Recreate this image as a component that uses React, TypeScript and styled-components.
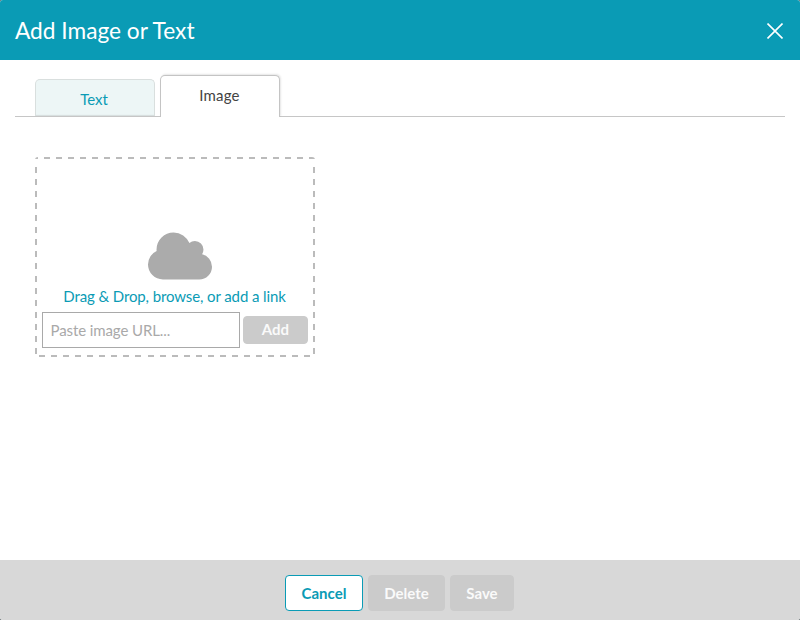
import React from 'react';
import styled, { createGlobalStyle, css } from 'styled-components';

const GlobalStyle = createGlobalStyle`
  * { box-sizing: border-box; }
  body { margin: 0; background: #6d7678; font-family: Lato, "Liberation Sans", sans-serif; }
`;

const Dialog = styled.div`
  display: flex;
  flex-direction: column;
  width: 800px;
  height: 620px;
  overflow: hidden;
  background: #fff;
  border-radius: 3px;
`;

const Header = styled.header`
  display: flex;
  align-items: center;
  justify-content: space-between;
  height: 60px;
  padding: 2px 17px 0 15px;
  background: #0a9bb5;
`;

const Title = styled.h1`
  margin: 0;
  font-size: 22.7px;
  line-height: 30px;
  font-weight: 400;
  color: #fff;
`;

const CloseButton = styled.button`
  display: flex;
  padding: 0;
  border: 0;
  background: none;
`;

const Body = styled.main`
  flex: 1;
  padding: 15px 15px 0;
`;

const TabList = styled.div`
  display: flex;
  align-items: flex-end;
  gap: 5px;
  height: 42px;
  padding: 0 20px;
  border-bottom: 1px solid #c6c6c6;
`;

const Tab = styled.button<{ $active?: boolean }>`
  width: 120px;
  height: 37px;
  padding: 2px 2px 0 0;
  border: 1px solid #d9dfde;
  border-bottom: 0;
  border-radius: 5px 5px 0 0;
  background: #edf6f6;
  box-shadow: inset 0 -2px 1px -1px #d5dddd;
  color: #0a9bb5;
  font: 400 15px/20px Lato, sans-serif;
  ${({ $active }) =>
    $active &&
    css`
      height: 42px;
      margin-bottom: -1px;
      padding: 0 1px 3px 0;
      border-color: #c4c4c4;
      background: #fff;
      box-shadow: 1px -1px 2px rgba(0, 0, 0, 0.1);
      clip-path: inset(-4px -4px 0 -4px);
      color: #444;
      letter-spacing: 0.2px;
    `}
`;

const DropZone = styled.section`
  display: flex;
  flex-direction: column;
  align-items: center;
  width: 280px;
  height: 200px;
  margin: 40px 0 0 20px;
  padding: 75px 7px 0;
  border-radius: 3px;
  --dash: #bbb 0 6px, transparent 6px 12.06px;
  background:
    repeating-linear-gradient(90deg, var(--dash)) 9px 0 / 271px 2px no-repeat,
    repeating-linear-gradient(90deg, var(--dash)) 4px 100% / 276px 2px no-repeat,
    repeating-linear-gradient(180deg, var(--dash)) 0 10px / 2px 188px no-repeat,
    repeating-linear-gradient(180deg, var(--dash)) 100% 10px / 2px 188px no-repeat,
    linear-gradient(#bbb, #bbb) 0 0 / 3px 2px no-repeat;
`;

const Hint = styled.p`
  margin: 6px 1px 6px 0;
  font-size: 15px;
  letter-spacing: -0.11px;
  line-height: 20px;
  color: #0a9bb5;
`;

const LinkRow = styled.div`
  display: flex;
  align-items: center;
  gap: 3px;
  width: 266px;
`;

const UrlInput = styled.input`
  width: 198px;
  height: 36px;
  padding: 0 7.5px;
  border: 1px solid #a9a9a9;
  background: #fff;
  font: 400 15px/20px Lato, sans-serif;
  letter-spacing: -0.1px;
  &::placeholder { color: #a9a9a9; }
`;

const Button = styled.button<{ $width: number; $small?: boolean; $outlined?: boolean }>`
  width: ${({ $width }) => $width}px;
  height: ${({ $small }) => ($small ? 28 : 36)}px;
  padding: ${({ $small }) => ($small ? '0 0 2px' : '0')};
  border: 1px solid ${({ $outlined }) => ($outlined ? '#0a9bb5' : '#cbcbcb')};
  border-radius: 4px;
  background: ${({ $outlined }) => ($outlined ? '#fff' : '#cbcbcb')};
  color: ${({ $outlined }) => ($outlined ? '#0a9bb5' : '#fafafa')};
  font: 700 15px/20px Lato, sans-serif;
`;

const Footer = styled.footer`
  display: flex;
  gap: 5px;
  height: 60px;
  padding: 15px 0 0 285px;
  background: #d8d8d8;
`;

const CloseIcon = () => (
  <svg width="16" height="16" viewBox="0 0 16 16" fill="none" stroke="#fff" strokeWidth="1.6">
    <path d="M0.5 0.5l15 15M15.5 0.5l-15 15" />
  </svg>
);

const CloudShape = styled.svg`
  flex: none;
  margin-left: 10px;
`;

const CloudIcon = () => (
  <CloudShape width="64" height="48" viewBox="0 -143 1920 1440" fill="#ababab">
    <path d="M1920 896q0 159-112.5 271.5T1536 1280H448q-185 0-316.5-131.5T0 832q0-132 71-241.5T258 427q-2-28-2-43 0-212 150-362t362-150q158 0 286.5 88T1242 190q70-62 166-62 106 0 181 75t75 181q0 75-41 138 129 30 213 134.5t84 239.5z" />
  </CloudShape>
);

export default function App() {
  return (
    <>
      <GlobalStyle />
      <Dialog>
        <Header>
          <Title>Add Image or Text</Title>
          <CloseButton aria-label="Close">
            <CloseIcon />
          </CloseButton>
        </Header>
        <Body>
          <TabList>
            <Tab>Text</Tab>
            <Tab $active>Image</Tab>
          </TabList>
          <DropZone>
            <CloudIcon />
            <Hint>Drag &amp; Drop, browse, or add a link</Hint>
            <LinkRow>
              <UrlInput placeholder="Paste image URL..." />
              <Button $width={65} $small>Add</Button>
            </LinkRow>
          </DropZone>
        </Body>
        <Footer>
          <Button $width={78} $outlined>Cancel</Button>
          <Button $width={77}>Delete</Button>
          <Button $width={64}>Save</Button>
        </Footer>
      </Dialog>
    </>
  );
}
